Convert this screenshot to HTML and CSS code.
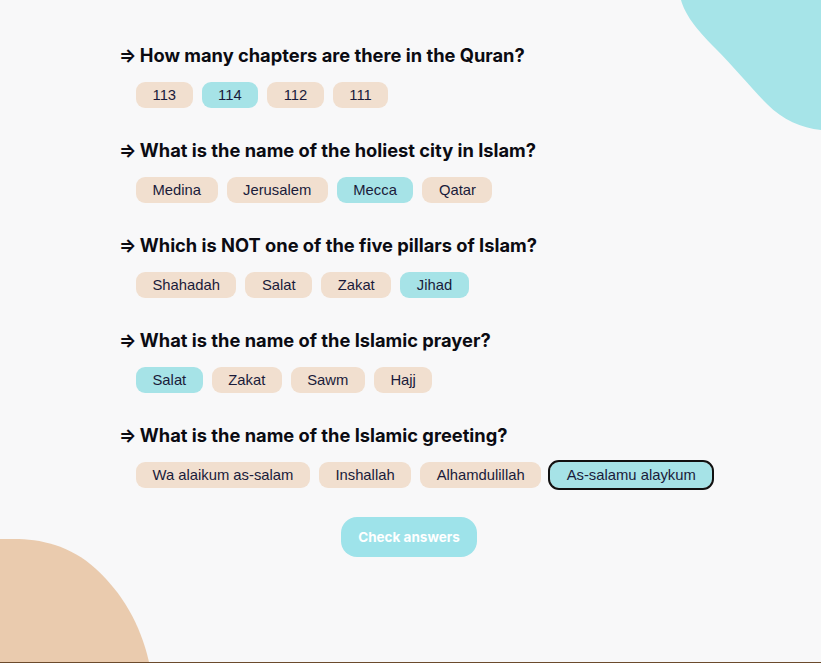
FILE: index.html
```html
<!DOCTYPE html>
<html>
<head>
<meta charset="utf-8">
<link rel="stylesheet" href="styles.css">
</head>
<body>
<div class="blob blob-top">
<svg width="150" height="132" viewBox="0 0 150 132"><path d="M10 0 C 14 14, 24 28, 44 48 C 64 68, 80 88, 96 104 C 112 120, 130 128, 150 130 L150 0 Z" fill="#a6e4e8"/></svg>
</div>
<div class="blob blob-bottom">
<svg width="152" height="124" viewBox="0 0 152 124"><path d="M0 0 L14 0 C 40 0, 70 6, 96 30 C 122 54, 140 84, 149 123 L0 123 Z" fill="#eacbae"/></svg>
</div>
<main class="quiz">
  <section class="question">
    <h2><span class="arrow">⇒</span> How many chapters are there in the Quran?</h2>
    <div class="answers">
      <span class="answer">113</span>
      <span class="answer selected">114</span>
      <span class="answer">112</span>
      <span class="answer">111</span>
    </div>
  </section>
  <section class="question">
    <h2><span class="arrow">⇒</span> What is the name of the holiest city in Islam?</h2>
    <div class="answers">
      <span class="answer">Medina</span>
      <span class="answer">Jerusalem</span>
      <span class="answer selected">Mecca</span>
      <span class="answer">Qatar</span>
    </div>
  </section>
  <section class="question">
    <h2><span class="arrow">⇒</span> Which is NOT one of the five pillars of Islam?</h2>
    <div class="answers">
      <span class="answer">Shahadah</span>
      <span class="answer">Salat</span>
      <span class="answer">Zakat</span>
      <span class="answer selected">Jihad</span>
    </div>
  </section>
  <section class="question">
    <h2><span class="arrow">⇒</span> What is the name of the Islamic prayer?</h2>
    <div class="answers">
      <span class="answer selected">Salat</span>
      <span class="answer">Zakat</span>
      <span class="answer">Sawm</span>
      <span class="answer">Hajj</span>
    </div>
  </section>
  <section class="question">
    <h2><span class="arrow">⇒</span> What is the name of the Islamic greeting?</h2>
    <div class="answers">
      <span class="answer">Wa alaikum as-salam</span>
      <span class="answer">Inshallah</span>
      <span class="answer">Alhamdulillah</span>
      <span class="answer selected focused">As-salamu alaykum</span>
    </div>
  </section>
  <div class="actions">
    <button class="check">Check answers</button>
  </div>
</main>
<div class="bottom-line"></div>
</body>
</html>
```
FILE: styles.css
```css
html, body {
  margin: 0;
  padding: 0;
}
body {
  width: 821px;
  height: 663px;
  background: #f8f8f9;
  position: relative;
  overflow: hidden;
  font-family: "Liberation Sans", Arial, sans-serif;
}
.blob {
  position: absolute;
  line-height: 0;
}
.blob-top {
  top: 0;
  right: 0;
}
.blob-bottom {
  left: 0;
  bottom: 0;
}
.bottom-line {
  position: absolute;
  left: 0;
  right: 0;
  bottom: 0;
  height: 1px;
  background: #6b4a2c;
}
.quiz {
  position: relative;
  width: 581px;
  margin: 0 auto;
  padding-top: 44px;
}
.question {
  margin-bottom: 31px;
}
.question:last-of-type {
  margin-bottom: 0;
}
.question h2 {
  margin: 0 0 16px -1px;
  font-family: Inter, "Noto Sans", sans-serif;
  font-weight: 700;
  font-size: 18.3px;
  line-height: 22px;
  color: #0b0b12;
  white-space: nowrap;
}
.arrow {
  margin-right: -1px;
}
.answers {
  display: flex;
  gap: 9px;
  padding-left: 16px;
}
.answer {
  display: inline-flex;
  align-items: center;
  flex: none;
  white-space: nowrap;
  height: 26px;
  padding: 0 16.5px;
  border-radius: 9px;
  background: #f1dfcf;
  color: #1a1b3a;
  font-size: 14.8px;
}
.answer.selected {
  background: #a6e3e7;
}
.answer.focused {
  outline: 2px solid #111;
  outline-offset: -0.5px;
}
.actions {
  display: flex;
  justify-content: center;
  margin-top: 29px;
  padding-right: 3px;
}
.check {
  width: 136px;
  height: 40px;
  border: none;
  border-radius: 16px;
  background: #9ee3ea;
  color: #fff;
  font-family: Inter, "Noto Sans", sans-serif;
  font-weight: 700;
  font-size: 13.5px;
  cursor: pointer;
}
```
